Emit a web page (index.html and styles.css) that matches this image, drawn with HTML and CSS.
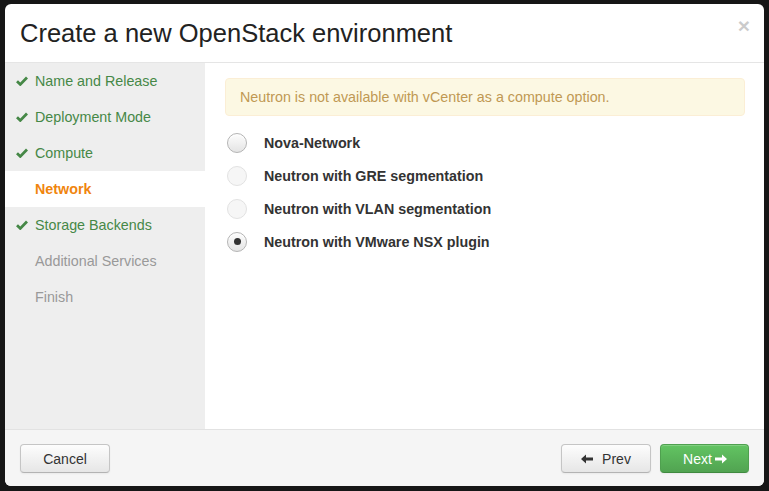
FILE: index.html
```html
<!DOCTYPE html>
<html>
<head>
<meta charset="utf-8">
<title>Create a new OpenStack environment</title>
<link rel="stylesheet" href="styles.css">
</head>
<body>
<div class="modal">
  <div class="modal-header">
    <h3 class="title">Create a new OpenStack environment</h3>
    <span class="close">×</span>
  </div>
  <div class="modal-body">
    <ul class="steps">
      <li class="step done"><svg class="check" viewBox="0 0 12 10"><path d="M1 5.2 L4.3 8.4 L11 1.6" /></svg>Name and Release</li>
      <li class="step done"><svg class="check" viewBox="0 0 12 10"><path d="M1 5.2 L4.3 8.4 L11 1.6" /></svg>Deployment Mode</li>
      <li class="step done"><svg class="check" viewBox="0 0 12 10"><path d="M1 5.2 L4.3 8.4 L11 1.6" /></svg>Compute</li>
      <li class="step active">Network</li>
      <li class="step done"><svg class="check" viewBox="0 0 12 10"><path d="M1 5.2 L4.3 8.4 L11 1.6" /></svg>Storage Backends</li>
      <li class="step">Additional Services</li>
      <li class="step">Finish</li>
    </ul>
    <div class="pane">
      <div class="alert">Neutron is not available with vCenter as a compute option.</div>
      <div class="options">
        <label class="option"><span class="radio"></span>Nova-Network</label>
        <label class="option"><span class="radio disabled"></span>Neutron with GRE segmentation</label>
        <label class="option"><span class="radio disabled"></span>Neutron with VLAN segmentation</label>
        <label class="option"><span class="radio checked"></span>Neutron with VMware NSX plugin</label>
      </div>
    </div>
  </div>
  <div class="modal-footer">
    <button class="btn btn-cancel">Cancel</button>
    <div class="nav">
      <button class="btn"><svg class="arrow" viewBox="0 0 12 10"><path d="M0 5 L5 0.5 L5 3.6 L12 3.6 L12 6.4 L5 6.4 L5 9.5 Z"/></svg>Prev</button>
      <button class="btn btn-success">Next<svg class="arrow arrow-r" viewBox="0 0 12 10"><path d="M12 5 L7 0.5 L7 3.6 L0 3.6 L0 6.4 L7 6.4 L7 9.5 Z"/></svg></button>
    </div>
  </div>
</div>
</body>
</html>
```
FILE: styles.css
```css
* { box-sizing: border-box; }
html, body { margin: 0; height: 100%; }
body {
  background: #161616;
  padding: 4px 5px 5px 5px;
  font-family: "Liberation Sans", Arial, Helvetica, sans-serif;
  font-size: 14.3px;
  color: #333;
}
.modal {
  width: 759px;
  height: 482px;
  background: #fff;
  border-radius: 6px;
  overflow: hidden;
  display: flex;
  flex-direction: column;
}
.modal-header {
  height: 59px;
  flex: none;
  border-bottom: 1px solid #e5e5e5;
  display: flex;
  justify-content: space-between;
  padding: 0 14px 0 15px;
}
.title {
  margin: 0;
  font-weight: normal;
  font-size: 25.5px;
  line-height: 59px;
  color: #222;
}
.close {
  font-size: 21px;
  font-weight: bold;
  color: #000;
  opacity: 0.2;
  line-height: 1;
  margin-top: 11px;
}
.modal-body {
  flex: 1;
  display: flex;
  min-height: 0;
}
.steps {
  list-style: none;
  margin: 0;
  padding: 0;
  width: 200px;
  flex: none;
  background: #eeeeee;
}
.step {
  height: 36px;
  line-height: 36px;
  padding-left: 30px;
  color: #999;
  position: relative;
}
.step.done { color: #468847; }
.step.active {
  background: #fff;
  color: #f0850e;
  font-weight: bold;
}
.check {
  position: absolute;
  left: 11px;
  top: 13px;
  width: 12px;
  height: 10px;
  fill: none;
  stroke: #468847;
  stroke-width: 2.8;
}
.pane {
  flex: 1;
  padding: 15px 19px 0 20px;
}
.alert {
  background: #fcf8e3;
  border: 1px solid #fbeed5;
  border-radius: 4px;
  color: #c09853;
  padding: 8px 14px;
  line-height: 20px;
}
.options {
  margin-top: 10px;
  display: flex;
  flex-direction: column;
}
.option {
  height: 33px;
  display: flex;
  align-items: center;
  font-weight: bold;
  color: #333;
}
.radio {
  width: 20px;
  height: 20px;
  margin-left: 2px;
  margin-right: 17px;
  border-radius: 50%;
  border: 1px solid #b4b4b4;
  background: linear-gradient(#fdfdfd, #e4e4e4);
  box-shadow: inset 0 1px 1px #fff;
  display: flex;
  align-items: center;
  justify-content: center;
}
.radio.disabled {
  border-color: #e2e2e2;
  background: #f6f6f6;
  box-shadow: none;
}
.radio.checked::after {
  content: "";
  width: 7px;
  height: 7px;
  border-radius: 50%;
  background: #333;
}
.modal-footer {
  height: 57px;
  flex: none;
  border-top: 1px solid #e2e2e2;
  background: #f5f5f5;
  display: flex;
  justify-content: space-between;
  align-items: flex-start;
  padding: 14px 15px 0 15px;
}
.nav { display: flex; gap: 9px; }
.btn {
  height: 29px;
  width: 90px;
  font-family: inherit;
  font-size: 14px;
  color: #333;
  border: 1px solid #c5c5c5;
  border-bottom-color: #b3b3b3;
  border-radius: 4px;
  background: linear-gradient(#fdfdfd, #e6e6e6);
  box-shadow: inset 0 1px 0 rgba(255,255,255,.2), 0 1px 2px rgba(0,0,0,.05);
  display: flex;
  align-items: center;
  justify-content: center;
  padding: 0;
}
.btn-success {
  width: 89px;
  color: #fff;
  background: linear-gradient(#62c462, #51a351);
  border-color: #4fa04f;
  border-bottom-color: #3f8a3f;
  padding-left: 1px;
}
.arrow {
  width: 12px;
  height: 10px;
  fill: #333;
  margin-right: 9px;
}
.arrow-r {
  fill: #fff;
  margin-right: 0;
  margin-left: 3px;
}
```
